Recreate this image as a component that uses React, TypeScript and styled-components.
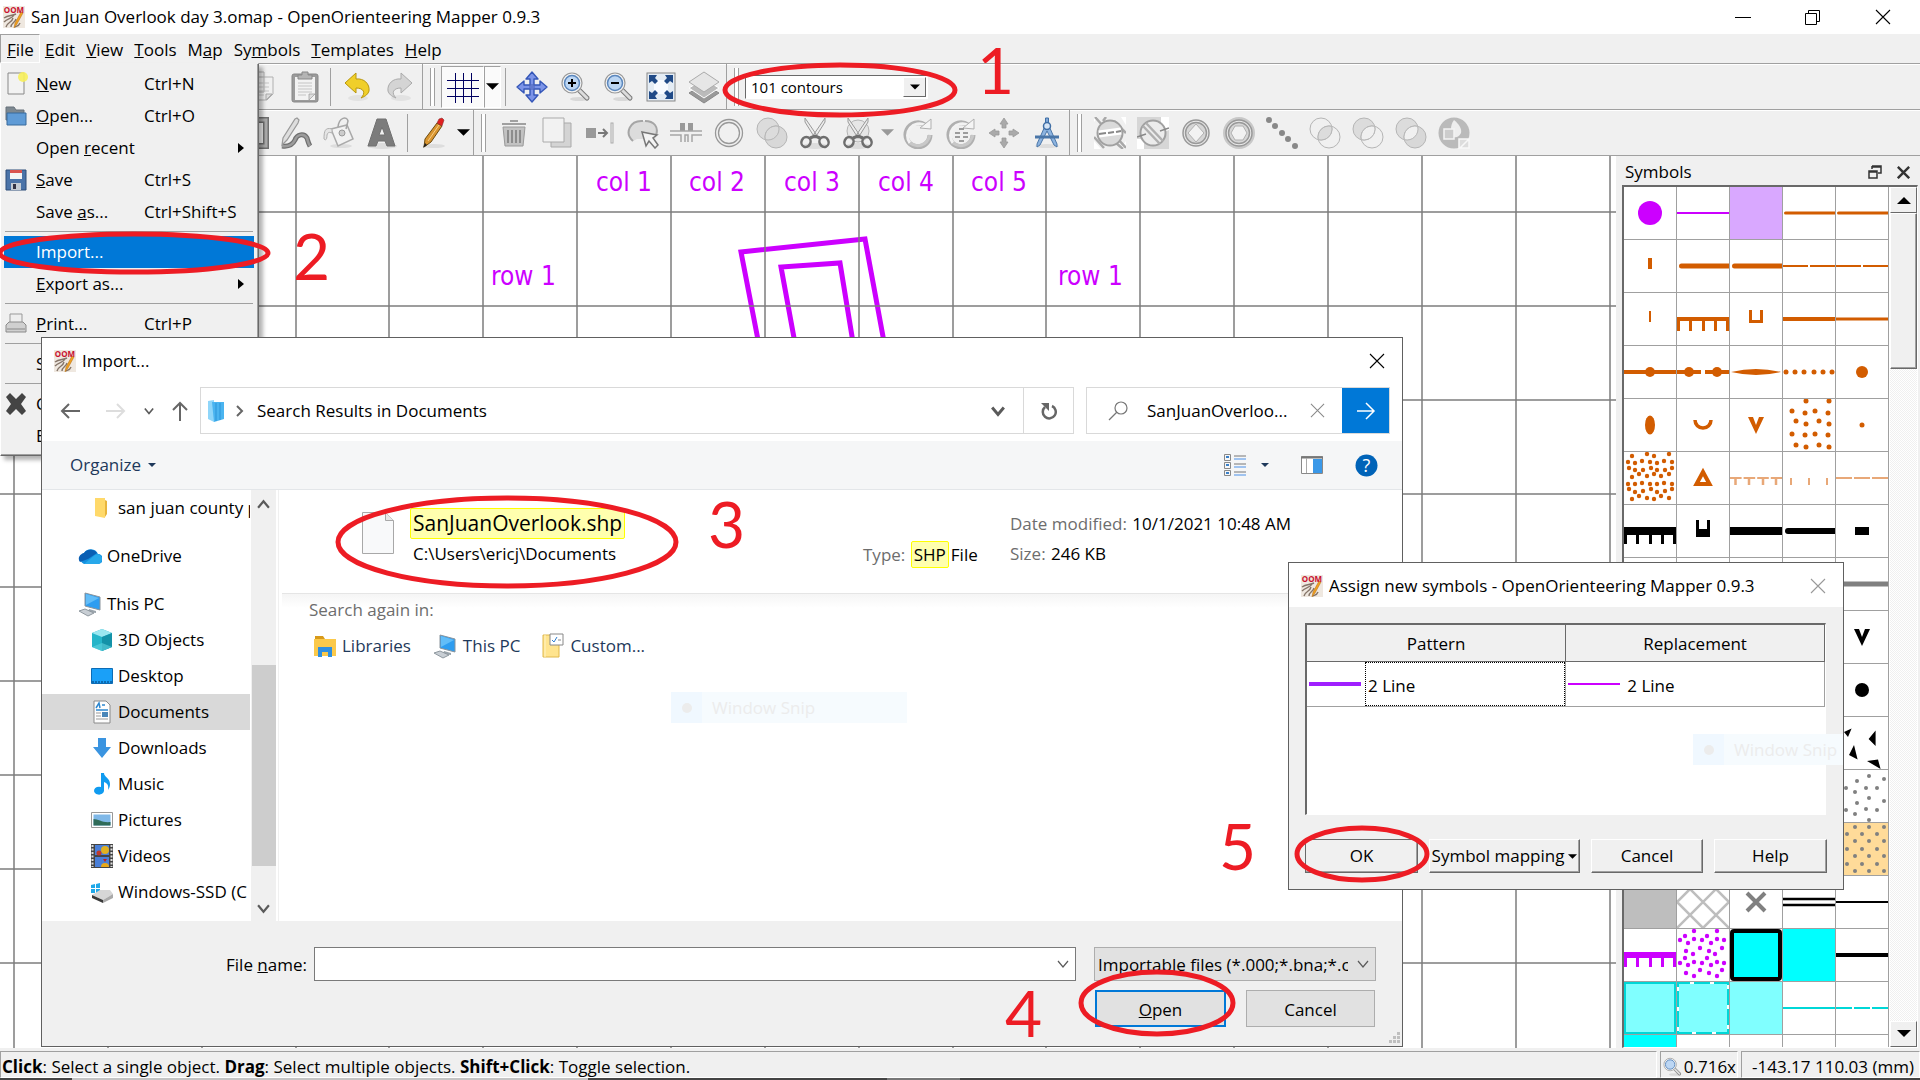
import React from 'react';
import styled, { createGlobalStyle, css } from 'styled-components';

const GlobalStyle = createGlobalStyle`
  * { box-sizing: border-box; }
  body { margin: 0; background: #f0f0f0; overflow: hidden; }
  body, button, input, select, table {
    font-family: "Open Sans", "Noto Sans", sans-serif;
    font-size: 17px;
    line-height: 24px;
    color: #000;
  }
  button { background: none; border: 0; padding: 0; }
  svg { display: block; flex: none; }
`;

/* ---------- window frame ---------- */

const Page = styled.div`
  position: relative;
  height: 100vh;
  display: flex;
  flex-direction: column;
  overflow: hidden;
  background: #f0f0f0;
`;

const TitleBar = styled.header`
  display: flex;
  align-items: center;
  height: 34px;
  flex: none;
  padding: 0 2px 0 3px;
  gap: 6px;
  background: #fff;
`;

const AppTitle = styled.h1`
  flex: 1;
  margin: 0;
  font-size: 17px;
  font-weight: 400;
`;

const WindowButtons = styled.div`
  display: flex;
`;

const WindowButton = styled.button`
  width: 70px;
  height: 34px;
  display: flex;
  align-items: center;
  justify-content: center;
`;

const MenuBar = styled.nav`
  display: flex;
  flex: none;
  height: 29px;
`;

const MenuBarItem = styled.button<{ $open?: boolean }>`
  padding: 2px 5px 0 4px;
  height: 29px;
  border: 1px solid transparent;
  ${(p) => p.$open && css`
    padding: 2px 5px 0 6px;
    border-color: #a0a0a0 #fff #fff #a0a0a0;
  `}
`;

/* ---------- toolbars ---------- */

const Toolbar = styled.div<{ $inset: number }>`
  display: flex;
  flex: none;
  height: 46px;
  padding-left: ${(p) => p.$inset}px;
  border-top: 1px solid #a0a0a0;
  box-shadow: inset 0 1px #fff;
`;

const ToolGroup = styled.div<{ $open?: boolean }>`
  display: flex;
  align-items: center;
  padding-right: 1px;
  border-right: ${(p) => (p.$open ? 0 : 1)}px solid #a0a0a0;
`;

const Grip = styled.span`
  width: 5px;
  height: 38px;
  margin: 0 6px 0 7px;
  border: solid #a0a0a0;
  border-width: 0 1px;
  background: #fff;
`;

const Separator = styled.span`
  width: 1px;
  height: 38px;
  margin: 0 4px;
  background: #a0a0a0;
`;

const ToolButton = styled.button<{ $narrow?: boolean; $pressed?: boolean }>`
  width: ${(p) => (p.$narrow ? 17 : 43)}px;
  height: 42px;
  display: flex;
  align-items: center;
  justify-content: center;
  ${(p) => p.$pressed && css`
    background: #fafafa;
    border: 1px solid;
    border-color: #a0a0a0 #fff #fff #a0a0a0;
  `}
`;

const SelectShell = styled.span`
  position: relative;
  display: inline-flex;
`;

const SymbolSelect = styled.select`
  appearance: none;
  width: 183px;
  height: 24px;
  padding: 0 28px 0 5px;
  border: 1px solid;
  border-color: #696969 #fff #fff #696969;
  border-radius: 0;
  background: #fff;
  font-size: 15px;
  line-height: 20px;
`;

const SelectArrow = styled.span`
  position: absolute;
  right: 2px;
  top: 2px;
  width: 23px;
  height: 20px;
  display: flex;
  align-items: center;
  justify-content: center;
  pointer-events: none;
  background: #f0f0f0;
  border: 1px solid;
  border-color: #fff #696969 #696969 #fff;
`;

const Workspace = styled.main`
  display: flex;
  flex: 1;
  min-height: 0;
  border-top: 1px solid #a0a0a0;
`;

const MapView = styled.svg`
  flex: 1;
  min-width: 0;
  background: #fff;
`;

/* ---------- symbols dock ---------- */

const Dock = styled.aside`
  width: 304px;
  flex: none;
  display: flex;
  flex-direction: column;
  padding: 0 2px 0 6px;
`;

const DockHeader = styled.div`
  display: flex;
  align-items: center;
  height: 29px;
  padding: 3px 8px 0 3px;
  gap: 15px;
`;

const DockTitle = styled.h2`
  flex: 1;
  margin: 0;
  font-size: 17px;
  font-weight: 400;
`;

const SymbolFrame = styled.div`
  flex: 1;
  min-height: 0;
  display: flex;
  justify-content: space-between;
  overflow: hidden;
  background: #fff;
  border: solid;
  border-width: 2px 1px 1px 2px;
  border-color: #696969 #fff #fff #696969;
`;

const SymbolGrid = styled.div`
  display: grid;
  grid-template-columns: repeat(5, 53px);
  grid-auto-rows: 53px;
`;

const SymbolCell = styled.button`
  border: solid #a0a0a0;
  border-width: 0 1px 1px 0;
  overflow: hidden;
`;

const ClassicScroll = styled.div`
  width: 27px;
  display: flex;
  flex-direction: column;
  background: repeating-conic-gradient(#f0f0f0 0 25%, #fff 0 50%) 0 0 / 2px 2px;
`;

const ClassicScrollButton = styled.button`
  height: 26px;
  display: flex;
  align-items: center;
  justify-content: center;
  background: #f0f0f0;
  border: 1px solid;
  border-color: #fff #696969 #696969 #fff;
`;

const ClassicThumb = styled.div`
  height: 156px;
  margin-bottom: auto;
  background: #f0f0f0;
  border: 1px solid;
  border-color: #fff #696969 #696969 #fff;
  box-shadow: inset -1px -1px #a0a0a0;
`;

/* ---------- status bar ---------- */

const StatusBar = styled.footer`
  display: flex;
  flex: none;
  gap: 3px;
  height: 29px;
  margin-top: 1px;
  padding-top: 2px;
`;

const StatusCell = styled.div<{ $grow?: boolean }>`
  display: flex;
  align-items: center;
  gap: 2px;
  flex: ${(p) => (p.$grow ? '1' : 'none')};
  padding: 4px 1px 0;
  white-space: pre;
  border: 1px solid;
  border-color: #a0a0a0 #fff #fff #a0a0a0;
`;

const Coordinates = styled(StatusCell)`
  width: 179px;
  padding-left: 10px;
`;

const TaskbarEdge = styled.div`
  flex: none;
  height: 2px;
  background: linear-gradient(90deg, #444 72px, #c4c4c4 72px 588px, #444 588px 887px, #777 887px 960px, #444 960px);
`;

/* ---------- file menu ---------- */

const FileMenu = styled.div`
  position: absolute;
  left: 0;
  top: 63px;
  width: 259px;
  padding: 3px 4px 3px 3px;
  background: #f0f0f0;
  border: 1px solid;
  border-color: #f0f0f0 #696969 #696969 #fff;
  box-shadow: inset -1px -1px #a0a0a0, 4px 4px 4px rgba(0, 0, 0, 0.3);
`;

const MenuRow = styled.button<{ $active?: boolean }>`
  display: grid;
  grid-template-columns: 32px 108px 1fr 16px;
  align-items: center;
  width: 100%;
  height: 32px;
  text-align: left;
  white-space: nowrap;
  &:first-child { height: 33px; }
  ${(p) => p.$active && css`
    background: #0078d7;
    color: #fff;
  `}
`;

const MenuIcon = styled.span`
  display: flex;
  align-items: center;
`;

const MenuLine = styled.hr`
  height: 1px;
  margin: 3px 1px 4px;
  border: 0;
  background: #a0a0a0;
`;

/* ---------- import dialog ---------- */

const ImportDialog = styled.section`
  position: absolute;
  left: 41px;
  top: 337px;
  width: 1362px;
  height: 710px;
  display: flex;
  flex-direction: column;
  background: #fff;
  border: 1px solid #606060;
`;

const DialogHeader = styled.div<{ $tall?: boolean }>`
  display: flex;
  flex: none;
  align-items: center;
  gap: 6px;
  height: ${(p) => (p.$tall ? 49 : 44)}px;
  padding: ${(p) => (p.$tall ? '0 17px 4px 12px' : '2px 17px 0 12px')};
  background: #fff;
`;

const DialogTitle = styled.h2`
  flex: 1;
  margin: 0;
  font-size: 17px;
  font-weight: 400;
  white-space: nowrap;
`;

const AddressRow = styled.div`
  display: flex;
  align-items: center;
  height: 47px;
  margin-bottom: 7px;
  padding: 0 12px 0 18px;
`;

const NavButtons = styled.div`
  display: flex;
  align-items: center;
  gap: 18px;
  margin-right: 12px;
`;

const HistoryButtons = styled.div`
  display: flex;
  gap: 26px;
`;

const AddressBox = styled.div`
  display: flex;
  align-items: center;
  flex: 1;
  height: 47px;
  border: 1px solid #d9d9d9;
`;

const Crumb = styled.span`
  flex: 1;
  margin-left: 12px;
`;

const BoxButton = styled.button<{ $divided?: boolean }>`
  width: 50px;
  height: 45px;
  display: flex;
  align-items: center;
  justify-content: center;
  border-left: ${(p) => (p.$divided ? 1 : 0)}px solid #d9d9d9;
`;

const SearchBox = styled.label`
  display: flex;
  align-items: center;
  width: 304px;
  height: 47px;
  margin-left: 12px;
  padding-left: 21px;
  border: 1px solid #d9d9d9;
`;

const SearchInput = styled.input`
  flex: 1;
  min-width: 0;
  margin-left: 19px;
  padding: 0;
  border: 0;
  outline: 0;
  text-overflow: ellipsis;
`;

const GoButton = styled(BoxButton)`
  width: 47px;
  background: #0078d7;
`;

const CommandBar = styled.div`
  display: flex;
  align-items: center;
  height: 49px;
  padding: 0 24px 0 28px;
  background: #f5f6f7;
  border-bottom: 1px solid #e3e6e9;
  color: #1e395b;
`;

const OrganizeButton = styled.button`
  display: flex;
  align-items: center;
  gap: 7px;
  margin-right: auto;
  color: #1e395b;
`;

const IconButton = styled.button<{ $gap: number }>`
  margin-left: ${(p) => p.$gap}px;
`;

const Browser = styled.div`
  flex: 1;
  min-height: 0;
  display: flex;
`;

const Tree = styled.ul`
  width: 208px;
  margin: 0;
  padding: 0;
  list-style: none;
  overflow: hidden;
`;

const TreeItem = styled.li<{ $root?: boolean; $selected?: boolean; $spaced?: boolean }>`
  display: flex;
  align-items: center;
  gap: 5px;
  height: 36px;
  margin-top: ${(p) => (p.$spaced ? 12 : 0)}px;
  padding: 0 0 0 ${(p) => (p.$root ? 36 : 49)}px;
  white-space: nowrap;
  background: ${(p) => (p.$selected ? '#d9d9d9' : 'transparent')};
`;

const TreeScroll = styled.div`
  width: 25px;
  margin: 0 2px 0 1px;
  display: flex;
  flex-direction: column;
  align-items: center;
  justify-content: space-between;
  padding: 8px 0 6px;
  background: #f0f0f0;
`;

const TreeThumb = styled.div`
  width: 24px;
  height: 201px;
  margin-top: 117px;
  background: #cdcdcd;
`;

const Results = styled.div`
  flex: 1;
  min-width: 0;
  border-left: 1px solid #f0f0f0;
`;

const FileEntry = styled.article`
  display: grid;
  grid-template-columns: 48px 453px 147px 1fr;
  grid-template-rows: 32px 28px;
  align-items: center;
  height: 104px;
  margin-left: 3px;
  padding: 17px 0 0 80px;
  border-bottom: 1px solid #e5e5e5;
`;

const FileIcon = styled.div`
  grid-row: 1 / 3;
  align-self: start;
  padding-top: 5px;
`;

const Mark = styled.mark<{ $big?: boolean }>`
  display: inline-block;
  padding: ${(p) => (p.$big ? '1px 2px' : '0 2px')};
  margin-right: 2px;
  font-size: ${(p) => (p.$big ? 21 : 17)}px;
  line-height: ${(p) => (p.$big ? 27 : 25)}px;
  background: #ffffae;
  border: 1px solid #ffff00;
  border-radius: 2px;
`;

const PathText = styled.span`
  padding: 2px 0 0 3px;
  grid-column: 2;
`;

const Meta = styled.span<{ $col: number }>`
  grid-column: ${(p) => p.$col};
  padding-top: 2px;
  white-space: nowrap;
`;

const Muted = styled.span`
  margin-right: 1px;
  color: #6d6d6d;
`;

const SearchAgain = styled.div`
  margin-left: 3px;
  padding: 4px 0 0 27px;
  color: #6d6d6d;
  background: linear-gradient(#f5f5f5, #fff 14px);
`;

const PlaceLinks = styled.div`
  display: flex;
  gap: 22px;
  padding: 11px 0 0 5px;
`;

const PlaceLink = styled.a`
  display: flex;
  align-items: center;
  gap: 6px;
  color: #1e395b;
  text-decoration: none;
`;

const Ghost = styled.div<{ $x: number; $y: number; $w: number }>`
  position: absolute;
  left: ${(p) => p.$x}px;
  top: ${(p) => p.$y}px;
  width: ${(p) => p.$w}px;
  height: 31px;
  display: flex;
  align-items: center;
  gap: 19px;
  padding: 1px 0 0 10px;
  overflow: hidden;
  white-space: nowrap;
  color: #ececec;
  background: linear-gradient(90deg, #f0f8ff 31px, #f6fbfe 31px);
`;

const DialogFooter = styled.div`
  position: relative;
  flex: none;
  display: grid;
  grid-template-columns: 1fr 762px 282px;
  column-gap: 18px;
  row-gap: 9px;
  align-content: start;
  height: 125px;
  padding: 26px 26px 0 0;
  background: #f0f0f0;
`;

const FieldLabel = styled.label`
  justify-self: end;
  align-self: center;
  padding-top: 1px;
  margin-right: -11px;
`;

const FieldShell = styled.span`
  position: relative;
  display: flex;
  height: 34px;
`;

const FileInput = styled.input`
  flex: 1;
  border: 1px solid #7a7a7a;
  background: #fff;
  padding: 0 30px 0 4px;
`;

const TypeSelect = styled.select`
  appearance: none;
  width: 282px;
  padding: 1px 27px 0 3px;
  border: 1px solid #adadad;
  border-radius: 0;
  background: #e1e1e1;
`;

const FieldChevron = styled.span`
  position: absolute;
  right: 7px;
  top: 11px;
  pointer-events: none;
`;

const ActionRow = styled.div`
  grid-column: 3;
  display: flex;
  gap: 20px;
  padding: 0 1px;
`;

const FlatButton = styled.button<{ $primary?: boolean }>`
  flex: 1;
  height: 37px;
  padding-top: 2px;
  background: #e1e1e1;
  border: ${(p) => (p.$primary ? '2px solid #0078d7' : '1px solid #adadad')};
`;

const ResizeGrip = styled.span`
  position: absolute;
  right: 2px;
  bottom: 2px;
`;

/* ---------- assign dialog ---------- */

const AssignDialog = styled.section`
  position: absolute;
  left: 1288px;
  top: 562px;
  width: 556px;
  height: 328px;
  display: flex;
  flex-direction: column;
  background: #f0f0f0;
  border: 1px solid #606060;
`;

const TableFrame = styled.div`
  height: 192px;
  margin: 16px 17px 24px 16px;
  background: #fff;
  border: solid;
  border-width: 2px 1px 1px 2px;
  border-color: #696969 #fff #fff #696969;
`;

const MappingTable = styled.table`
  width: 100%;
  border-collapse: collapse;
  table-layout: fixed;
`;

const HeadCell = styled.th`
  height: 36px;
  padding: 3px 0 0;
  font-weight: 400;
  background: #f0f0f0;
  border: solid #696969;
  border-width: 0 1px 1px 0;
`;

const BodyCell = styled.td`
  height: 45px;
  padding: 0;
  border: solid #a0a0a0;
  border-width: 0 1px 1px 0;
`;

const CellRow = styled.div`
  display: flex;
  align-items: center;
  gap: 4px;
  height: 44px;
  padding-left: 2px;
`;

const CellText = styled.span<{ $focus?: boolean }>`
  flex: 1;
  height: 44px;
  padding-left: 2px;
  line-height: 45px;
  border: 1px ${(p) => (p.$focus ? 'dotted #000' : 'solid transparent')};
`;

const ButtonRow = styled.div`
  display: flex;
  gap: 11px;
  padding: 0 16px;
`;

const ClassicButton = styled.button<{ $w: number; $default?: boolean }>`
  width: ${(p) => p.$w}px;
  height: 34px;
  display: flex;
  align-items: center;
  justify-content: center;
  gap: 4px;
  white-space: nowrap;
  border: 1px solid;
  border-color: #fff #696969 #696969 #fff;
  box-shadow: inset -1px -1px #a0a0a0;
  ${(p) => p.$default && css`
    border-color: #696969;
  `}
`;

/* ---------- annotations ---------- */

const Annotations = styled.svg`
  position: absolute;
  inset: 0;
  width: 100%;
  height: 100%;
  pointer-events: none;
  font-family: Lato, sans-serif;
  font-size: 64px;
`;

/* ---------- icon drawings ---------- */

type Size = { w?: number; h?: number };
const Draw = ({ w = 32, h = 32, vb, children }: Size & { vb?: string; children?: React.ReactNode }) => (
  <svg width={w} height={h} viewBox={vb ?? `0 0 ${w} ${h}`} fill="none" aria-hidden="true">{children}</svg>
);

const OomIcon = () => (
  <Draw w={22} h={24}>
    <rect y="1" width="22" height="22" fill="#efe8e0" />
    <path d="M1 13c4-3 8-2 12-4M1 17c4-4 8-3 10-7M3 22c1-5 6-4 7-9M8 22c0-4 4-4 5-8M12 22c2-1 4-1 5-4" stroke="#857569" strokeWidth="1.4" />
    <path d="M20 8l-6 11-3 4 1-5 6-11z" fill="#f0a020" stroke="#b06a10" strokeWidth=".5" />
    <text x="11" y="8" textAnchor="middle" fontSize="8" fontWeight="700" fill="#c8102e">OOM</text>
  </Draw>
);

const Close = ({ s = 16, c = '#000', t = 1.1 }: { s?: number; c?: string; t?: number }) => (
  <Draw w={s} h={s} vb="0 0 16 16"><path d="M1 1l14 14M15 1L1 15" stroke={c} strokeWidth={t} /></Draw>
);

const Down = ({ c = '#000', w = 13 }: { c?: string; w?: number }) => (
  <Draw w={w} h={w} vb="0 0 12 12"><path d="M0 3h12L6 9z" fill={c} /></Draw>
);

const Chevron = ({ c = '#5a5a5a', w = 12, t = 2, up = false }: { c?: string; w?: number; t?: number; up?: boolean }) => (
  <Draw w={w} h={w} vb="0 0 12 12"><path d={up ? 'M1 9l5-6 5 6' : 'M1 3l5 6 5-6'} stroke={c} strokeWidth={t} /></Draw>
);

const Magnifier = ({ sign, w = 32 }: { sign?: 'plus' | 'minus'; w?: number }) => (
  <Draw w={w} h={w} vb="0 0 32 32">
    <ellipse cx="20" cy="28" rx="9" ry="2" fill="#d8d8d8" />
    <path d="M19 18l9 9" stroke="#777" strokeWidth="5" strokeLinecap="round" />
    <path d="M19 18l9 9" stroke="#dcdcdc" strokeWidth="3" strokeLinecap="round" />
    <circle cx="13" cy="12" r="10" fill="#f4f4f4" stroke="#999" strokeWidth="1.2" />
    <circle cx="13" cy="12" r="7.5" fill="#bcd6f3" stroke="#5b87bd" strokeWidth="1.5" />
    {sign && <path d={sign === 'plus' ? 'M9 12h8M13 8v8' : 'M9 12h8'} stroke="#000" strokeWidth="2" />}
  </Draw>
);

const Move = ({ fill, stroke, gap }: { fill: string; stroke: string; gap?: boolean }) => (
  <Draw>
    {gap ? (
      <g fill={fill} stroke={stroke} strokeWidth=".8">
        {[0, 90, 180, 270].map((a) => (
          <path key={a} transform={`rotate(${a} 16 16)`} d="M16 1l4 6h-2v4h-4V7h-2z" />
        ))}
      </g>
    ) : (
      <g>
        <path d="M16 1l6 7h-4v6h6v-4l7 6-7 6v-4h-6v6h4l-6 7-6-7h4v-6H8v4l-7-6 7-6v4h6V8h-4z" fill={fill} stroke={stroke} strokeWidth="1.4" strokeLinejoin="round" />
        <rect x="13" y="13" width="6" height="6" fill="#5068bc" opacity=".6" />
      </g>
    )}
  </Draw>
);

const Turn = ({ fill, stroke, flip }: { fill: string; stroke: string; flip?: boolean }) => (
  <Draw>
    <ellipse cx="17" cy="27" rx="10" ry="3" fill="#e2e2e2" />
    <path transform={flip ? 'translate(32 0) scale(-1 1)' : undefined}
      d="M4 12L15 2v6c8-1 14 5 13 12-1 3-3 5-8 7 5-5 3-10-5-10v5z" fill={fill} stroke={stroke} strokeLinejoin="round" />
  </Draw>
);

const Scissors = ({ ring }: { ring?: boolean }) => (
  <Draw>
    {ring && <circle cx="16" cy="14" r="11" fill="#e6e6e6" stroke="#b5b5b5" />}
    <ellipse cx="16" cy="29" rx="13" ry="3" fill="#dcdcdc" />
    <path d="M6 1l13 19-3 1L6 5zM26 1L13 20l3 1L26 5z" fill="#ececec" stroke="#999" />
    <ellipse cx="7" cy="25" rx="4.5" ry="5" stroke="#6e6e6e" strokeWidth="2.5" transform="rotate(25 7 25)" />
    <ellipse cx="25" cy="25" rx="4.5" ry="5" stroke="#6e6e6e" strokeWidth="2.5" transform="rotate(-25 25 25)" />
    <path d="M11 21l5-2 5 2" stroke="#6e6e6e" strokeWidth="3" />
  </Draw>
);

const Rotate = ({ inner }: { inner?: boolean }) => (
  <Draw>
    <path d="M23 8A12 12 0 1 0 28 18" stroke="#b0b0b0" strokeWidth="5" />
    <path d="M23 8A12 12 0 0 0 8 26" stroke="#f2f2f2" strokeWidth="3" />
    <path d="M8 26c7 5 17 3 20-8" stroke="#c8c8c8" strokeWidth="3" />
    <path d="M18 11l11 1V2z" fill="#f4f4f4" stroke="#b0b0b0" />
    {inner && <path d="M10 16h5M18 16h5M10 20h5M18 20h5M14 12h5M14 24h5" stroke="#9c9c9c" strokeWidth="2" />}
  </Draw>
);

const LENS = 'M22.67 9.33A11 11 0 0 1 9.33 22.67A11 11 0 0 1 22.67 9.33z';
const Overlap = ({ mode }: { mode: 'union' | 'cut' | 'diff' | 'xor' }) => {
  const a = mode === 'cut' ? 'none' : '#dcdcdc';
  const b = mode === 'union' || mode === 'xor' ? '#d8d8d8' : 'none';
  return (
    <Draw>
      <circle cx="12" cy="12" r="11" fill={a} stroke="#b5b5b5" />
      <circle cx="20" cy="20" r="11" fill={b} stroke="#b5b5b5" />
      <path d={LENS} fill={mode === 'cut' || mode === 'union' ? '#dcdcdc' : '#f0f0f0'} stroke="#b5b5b5" />
    </Draw>
  );
};

const DiamondRing = ({ bold }: { bold?: boolean }) => (
  <Draw>
    {bold && <circle cx="16" cy="16" r="14" stroke="#c8c8c8" strokeWidth="4" />}
    <circle cx="16" cy="16" r="13" fill="#ececec" stroke="#999" strokeWidth="1.5" />
    <circle cx="16" cy="16" r="10.5" fill="#d6d6d6" stroke="#999" strokeWidth="1.5" />
    <path d={bold ? 'M12 9h8l4 7-4 7h-8l-4-7z' : 'M16 7l8 9-8 9-8-9z'} fill="#f2f2f2" stroke="#b0b0b0" />
  </Draw>
);

const Monitor = () => (
  <Draw w={24} h={26}>
    <path d="M7 2l15 4v13L7 15z" fill="#2e9df0" stroke="#8a949c" />
    <path d="M8 3l13 4-13 7z" fill="#62bdf8" />
    <path d="M11 18l7 2v2l-8-1z" fill="#9aa4ac" />
    <path d="M1 20l6-2 9 4-6 3z" fill="#c8ced4" stroke="#8f989f" />
  </Draw>
);

const DocSheet = () => (
  <Draw w={32} h={42}>
    <path d="M.5.5h23l8 8v33H.5z" fill="#f8f9fa" stroke="#a8a8a8" />
    <path d="M23.5.5v8h8" fill="#e8e8e8" stroke="#a8a8a8" />
  </Draw>
);

/* ---------- toolbar icon sets ---------- */

const CopyIcon = () => (
  <Draw>
    <path d="M3 1h15v20H3zM8 6h19v17l-6 6H8z" fill="#f0f0f0" stroke="#b0b0b0" />
    <path d="M11 12h12M11 16h12M11 20h12M11 24h7" stroke="#c4c4c4" />
    <path d="M20 29v-6h6z" fill="#ddd" stroke="#aaa" />
  </Draw>
);

const PasteIcon = () => (
  <Draw>
    <rect x="3" y="3" width="26" height="28" rx="2" fill="#9b9b9b" stroke="#888" />
    <path d="M6 6h20v23H6z" fill="#f2f2f2" />
    <path d="M9 12h14M9 15h14M9 18h14M9 21h14M9 24h8" stroke="#c4c4c4" />
    <path d="M20 29v-6h6z" fill="#ddd" stroke="#999" strokeWidth=".7" />
    <path d="M9 8V4h4V1h6v3h4v4z" fill="#b4b4b4" stroke="#888" />
  </Draw>
);

const GridIcon = () => (
  <Draw><path d="M0 9.5h32M0 17.5h32M0 25.5h32M8.5 2v31M16.5 2v31M24.5 2v31" stroke="#000060" /></Draw>
);

const FitIcon = () => (
  <Draw>
    <rect x="2" y="2" width="28" height="28" fill="#e4ecf4" stroke="#888" />
    <rect x="9" y="9" width="14" height="14" fill="#f8fbff" />
    <path d="M4 4h8l-2 3 3 3-3 3-3-3-3 2zM28 4v8l-3-2-3 3-3-3 3-3-2-3zM4 28v-8l3 2 3-3 3 3-3 3 2 3zM28 28h-8l2-3-3-3 3-3 3 3 3-2z" fill="#204a87" />
  </Draw>
);

const LayersIcon = () => (
  <Draw w={34} h={34}>
    <path d="M17 14l15 9-15 10L2 23z" fill="#999" stroke="#888" />
    <path d="M17 9l15 9-15 10L2 18z" fill="#bbb" stroke="#fff" />
    <path d="M17 2l15 10-15 10L2 12z" fill="#e6e6e6" stroke="#aaa" />
  </Draw>
);

const DrawRectIcon = () => (
  <Draw><rect x="3" y="3" width="26" height="26" stroke="#707070" strokeWidth="6" /><rect x="3" y="3" width="26" height="26" stroke="#aaa" strokeWidth="3" /></Draw>
);

const CurveIcon = () => (
  <Draw>
    <path d="M2 29c7 1 11-2 13-6 2-6 9-7 12-2 1 3 1 5 3 8" stroke="#707070" strokeWidth="5" />
    <path d="M2 29c7 1 11-2 13-6 2-6 9-7 12-2 1 3 1 5 3 8" stroke="#9c9c9c" strokeWidth="2.5" />
    <path d="M15 2l2-1 2 2-1 3L7 23l-5 5 1-7z" fill="#dedede" stroke="#999" strokeWidth="1.2" />
  </Draw>
);

const BucketIcon = () => (
  <Draw>
    <ellipse cx="18" cy="29" rx="11" ry="2" fill="#ddd" />
    <path d="M8 12l16-4 6 14-15 7z" fill="#f2f2f2" stroke="#aaa" strokeWidth="1.5" />
    <path d="M15 10c1-10 9-11 10-6l-2 8" stroke="#a5a5a5" strokeWidth="1.5" />
    <circle cx="19" cy="16" r="3" fill="#ccc" stroke="#999" />
    <path d="M9 12c-7-2-8 2-8 10 2 2 3 0 3-4 1-3 2-3 5-2z" fill="#e5e5e5" stroke="#b0b0b0" />
  </Draw>
);

const LetterIcon = () => (
  <Draw>
    <ellipse cx="16" cy="29" rx="15" ry="3" fill="#ddd" />
    <path fillRule="evenodd" d="M11 2h9l9 27h-8l-2-5h-7l-2 5H2zM16 10l-3 8h6z" fill="#7c7c7c" stroke="#707070" />
  </Draw>
);

const PencilIcon = () => (
  <Draw>
    <ellipse cx="16" cy="29" rx="11" ry="2" fill="#ddd" />
    <g transform="translate(2 0)">
      <path d="M17 6l5 3-11 16-7 5 1-8z" fill="#d9952f" stroke="#6b4a10" />
      <path d="M17 6l2-4 3-1 2 2-1 3-1 3z" fill="#e02020" stroke="#833" strokeWidth=".6" />
      <path d="M5 26l2 2-4 3z" fill="#222" />
      <path d="M19 8L8 24" stroke="#f8d08a" />
    </g>
  </Draw>
);

const TrashIcon = () => (
  <Draw>
    <path d="M5 10h22l-2 19H7z" fill="#c2c2c2" stroke="#9a9a9a" />
    <path d="M10 13v13M14 13v13M18 13v13M22 13v13" stroke="#8c8c8c" strokeWidth="2" />
    <path d="M4 7h24M12 4h8" stroke="#a0a0a0" strokeWidth="2" />
  </Draw>
);

const DuplicateIcon = () => (
  <Draw>
    <path d="M10 6h20v24H10z" fill="#d4d4d4" stroke="#aaa" />
    <path d="M2 1h21v24H2z" fill="#f2f2f2" stroke="#aaa" />
  </Draw>
);

const SwitchIcon = () => (
  <Draw>
    <rect x="2" y="11" width="10" height="10" fill="#999" />
    <path d="M14 16h8M19 12l4 4-4 4" stroke="#777" strokeWidth="2" />
    <rect x="27" y="6" width="2" height="20" stroke="#aaa" />
  </Draw>
);

const LassoIcon = () => (
  <Draw>
    <path d="M6 24C-3 16 3 3 16 4c13 0 18 10 12 18H10z" fill="#dcdcdc" />
    <path d="M6 24C-3 16 3 3 16 4M18 4c9 0 14 6 11 14" stroke="#a5a5a5" strokeWidth="2" />
    <path d="M15 15l15 3-4 3 5 7-3 3-6-7-3 5z" fill="#f4f4f4" stroke="#777" strokeWidth="1.5" />
  </Draw>
);

const JunctionIcon = () => (
  <Draw>
    <path d="M10 6h5v8h-5zM18 6h5v8h-5z" fill="#999" />
    <path d="M0 14h32M0 18h11v7M22 25v-7h10M15 25v-7h3v7" stroke="#a5a5a5" strokeWidth="1.5" />
  </Draw>
);

const RingIcon = () => (
  <Draw><circle cx="16" cy="16" r="13.5" stroke="#989898" strokeWidth="1.3" /><circle cx="16" cy="16" r="10.5" stroke="#989898" strokeWidth="1.3" /></Draw>
);

const CompassIcon = () => (
  <Draw>
    <ellipse cx="16" cy="29" rx="12" ry="2" fill="#ddd" />
    <path d="M14.5 1h3v6h-3z" fill="#7fa8d8" stroke="#3f6ea5" />
    <path d="M14 9L6 27v3l3-2 7-14 7 14 3 2v-3l-8-18z" fill="#8db4e0" stroke="#4a76a8" />
    <circle cx="16" cy="9" r="3.5" fill="#d5e4f5" stroke="#3f6ea5" strokeWidth="1.5" />
    <path d="M4 20h24" stroke="#4a76a8" strokeWidth="3" />
  </Draw>
);

const CutHoleIcon = () => (
  <Draw>
    <path d="M0 0h4L0 5zM27 0h5v8zM0 24l7 8H0zM32 24v8h-6z" fill="#fff" />
    <path d="M1 0l8 9M12 0l-3 4M32 16L20 4M0 20l10 11M22 26l7 6M24 22l8 9" stroke="#a8a8a8" strokeWidth="2.5" />
    <circle cx="16" cy="16" r="12.5" fill="#dadada" stroke="#a0a0a0" strokeWidth="2" />
    <path d="M5 17l22-3" stroke="#fff" strokeWidth="7" />
    <path d="M5 17l7-1M14 16l6-1M22 15l5-1" stroke="#888" strokeWidth="2" />
  </Draw>
);

const CutAwayIcon = () => (
  <Draw>
    <path d="M0 0h32v32H0z" fill="#d6d6d6" />
    <path d="M0 22h7v10H0zM24 0h8v13l-8 3z" fill="#fff" />
    <circle cx="16" cy="16" r="12.5" fill="#ececec" stroke="#a0a0a0" strokeWidth="2" />
    <path d="M9 6l17 18M6 9l17 18" stroke="#b0b0b0" strokeWidth="2.5" />
    <path d="M0 20l9-3M23 14l9-3" stroke="#888" strokeWidth="1.5" />
  </Draw>
);

const DotsIcon = () => (
  <Draw><g fill="#888">{[[3, 3], [9, 9], [16, 16], [22, 22], [29, 29]].map(([x, y]) => <circle key={x} cx={x} cy={y} r="3" />)}</g></Draw>
);

const MaskIcon = () => (
  <Draw>
    <circle cx="16" cy="16" r="15.5" fill="#bababa" />
    <path d="M16 3c5 4 8 9 7 13-2 4-5 5-7 4-4-4-4-12 0-17z" fill="#eee" />
    <path d="M6 12h10v10H6z" fill="#ccc" stroke="#f4f4f4" strokeWidth="1.5" />
    <path d="M21 22h10v9H21zM22 31l9-9" fill="#ddd" stroke="#f8f8f8" strokeWidth="1.5" />
  </Draw>
);

/* ---------- menu and tree icons ---------- */

const NewIcon = () => (
  <Draw w={24} h={26}>
    <path d="M4 2h16v21H4z" fill="#f2f2f2" stroke="#888" />
    <circle cx="19" cy="6" r="5" fill="#f7ef5a" opacity=".9" />
  </Draw>
);
const OpenIcon = () => (
  <Draw w={24} h={24}>
    <path d="M2 3h8l2 3h8v10H2z" fill="#7d8890" stroke="#66707a" />
    <path d="M3 9h19v12H3z" fill="#5f9bd6" stroke="#396a9c" />
  </Draw>
);
const SaveIcon = () => (
  <Draw w={24} h={24}>
    <path d="M2 2h20v20H2z" fill="#4a73a8" stroke="#2d4d78" />
    <path d="M6 2h12v9H6z" fill="#f4f4f4" /><path d="M6 2h12v3H6z" fill="#d9534f" />
    <path d="M7 15h10v7H7z" fill="#c5ccd4" /><path d="M9 16h3v5H9z" fill="#334" />
  </Draw>
);
const PrintIcon = () => (
  <Draw w={24} h={24}>
    <path d="M6 2h12v11H6z" fill="#eee" stroke="#999" />
    <path d="M2 13l3-3h14l3 3v7H2z" fill="#d0d0d0" stroke="#8a8a8a" />
    <path d="M3 17h18" stroke="#888" />
  </Draw>
);
const ExitCross = () => (
  <Draw w={24} h={24}><path d="M2 5l4-4 6 6 6-6 4 4-5 7 5 7-4 4-6-6-6 6-4-4 5-7z" fill="#444" /></Draw>
);

const FolderIcon = () => (
  <Draw w={22} h={24}><path d="M4 2h10v20l-10-2z" fill="#ffd96a" /><path d="M14 4l2 1v13l-2 3z" fill="#e8b53c" /></Draw>
);
const CloudIcon = () => (
  <Draw w={24} h={20}>
    <path d="M6 18a6 6 0 0 1 0-11 8 8 0 0 1 14 1 5 5 0 0 1 0 10z" fill="#1490df" />
    <path d="M6 7a8 8 0 0 1 13 0l-9 6-8 3C-1 12 2 8 6 7z" fill="#0a5fb4" />
    <path d="M6 18l11-9c4-2 7 1 7 4s-2 5-4 5z" fill="#28a8ea" />
  </Draw>
);
const CubeIcon = () => (
  <Draw w={22} h={24}><path d="M11 1l10 4v14l-10 4-10-4V5z" fill="#25b5c9" /><path d="M11 1l10 4-10 4L1 5z" fill="#9be7f0" /><path d="M11 9v14l10-4V5z" fill="#1492a8" /><path d="M1 19l10-4 10 4-10 4z" fill="#60d4e0" opacity=".6" /></Draw>
);
const DesktopIcon = () => (
  <Draw w={22} h={18}><path d="M.5 1.5h21v15H.5z" fill="#1aa0f8" stroke="#0d6cb5" /><path d="M1 15h20" stroke="#0a5a9a" strokeWidth="1.5" strokeDasharray="2 1" /></Draw>
);
const DocumentsIcon = () => (
  <Draw w={22} h={24}><path d="M3 1h12l4 4v18H3z" fill="#fdfdfd" stroke="#8a8a8a" /><path d="M5 8l3-5 1 5M11 5h3M5 10h12" stroke="#2d88d0" strokeWidth="1.5" /><path d="M5 13h5M5 16h5M5 19h12" stroke="#999" /><path d="M11 12h6v5h-6z" fill="#4a86b8" /></Draw>
);
const DownloadIcon = () => (
  <Draw w={22} h={22}><path d="M7 1h8v9h5l-9 11-9-11h5z" fill="#3a94e0" /></Draw>
);
const MusicIcon = () => (
  <Draw w={22} h={24}><path d="M10 1h3c0 4 6 5 6 11 0 3-1 4-2 6 1-5-1-7-4-8v9a5 4 0 1 1-3-4z" fill="#109bf0" /></Draw>
);
const PictureIcon = () => (
  <Draw w={22} h={18}><path d="M.5 1.5h21v15H.5z" fill="#fff" stroke="#999" /><path d="M2.5 3.5h17v11h-17z" fill="#7fb8e8" /><path d="M2.5 8c5 0 9 4 17 3v3.5h-17z" fill="#2f6b58" /></Draw>
);
const VideoIcon = () => (
  <Draw w={22} h={24}><path d="M0 0h22v24H0z" fill="#444" /><path d="M4 1h14v10H4zM4 13h14v10H4z" fill="#4a7fd8" /><path d="M1.5 1v22M20.5 1v22" stroke="#ddd" strokeWidth="2" strokeDasharray="2 1.5" /><circle cx="14" cy="6" r="4" fill="#e0b020" /><circle cx="8" cy="9" r="2.5" fill="#c03a2a" /><path d="M10 23a4 4 0 0 1 8 0z" fill="#e8a818" /><path d="M12 15l2 3 2-3z" fill="#b22" /></Draw>
);
const DriveIcon = () => (
  <Draw w={22} h={22}><path d="M0 4l4-1v4H0zM5 3l4-1v5H5zM0 8h4v4H0zM5 8h4v5H5z" fill="#20a8e8" /><path d="M1 14l8-5h10l3 4-10 6z" fill="#d6d6d6" /><path d="M1 14l11 5v3L1 17z" fill="#3a3a3a" /><path d="M12 19l10-6v4l-10 5z" fill="#aaa" /></Draw>
);
const LibrariesIcon = () => (
  <Draw w={22} h={24}><path d="M1 2h8l2 3H1z" fill="#d89a1a" /><path d="M0 5h22v17H0z" fill="#fbc94a" /><path d="M4 23V13h14v10h-4v-5H8v5z" fill="#2f8fe0" /></Draw>
);
const CustomIcon = () => (
  <Draw w={22} h={26}><path d="M1 2h16v22H1z" fill="#ffe48e" stroke="#e0b84a" /><path d="M3 2v22" stroke="#fff3c4" /><path d="M8 1h13v11H8z" fill="#fff" stroke="#888" /><path d="M10 7l2 2 3-5" stroke="#2f7fd0" /><path d="M16 7h3" stroke="#888" /></Draw>
);

/* ---------- symbol set ---------- */

const BROWN = '#d25c00';
const PURPLE = '#cc00ff';
const PALE = '#e8a878';
const TEAL = '#00d7d7';

const Line = ({ c, t, x = 0 }: { c: string; t: number; x?: number }) => (
  <path d={`M${x ? x + t / 2 : 0} 26H52`} stroke={c} strokeWidth={t} strokeLinecap={x ? 'round' : 'butt'} />
);
const Dashed = ({ c, dash }: { c: string; dash: string }) => <path d="M0 26H52" stroke={c} strokeWidth="2" strokeDasharray={dash} />;
const Comb = ({ c, y, t, end }: { c: string; y: number; t: number; end: number }) => (
  <path d={`M0 ${y}h52v${t}H0zM0 ${y}h3V${end}H0zM12 ${y}h3V${end}h-3zM25 ${y}h3V${end}h-3zM37 ${y}h3V${end}h-3zM49 ${y}h3V${end}h-3z`} fill={c} />
);
const Dots = ({ c, r = 2, at }: { c: string; r?: number; at: string }) => (
  <g fill={c}>{at.split(' ').map((p) => { const [x, y] = p.split(','); return <circle key={p} cx={x} cy={y} r={r} />; })}</g>
);
const Fill = ({ c }: { c: string }) => <rect width="53" height="53" fill={c} />;
const Vee = ({ c }: { c: string }) => <path d="M18 18h5l3 8 3-8h5l-8 17z" fill={c} />;

const SYMBOLS: React.ReactNode[] = [
  <circle cx="26" cy="26" r="12" fill={PURPLE} />, <Line c={PURPLE} t={2} />, <Fill c="#d9a8ff" />, <Line c={BROWN} t={3} x={1} />, <Line c={BROWN} t={3} x={1} />,
  <path d="M26 18v11" stroke={BROWN} strokeWidth="4" />, <Line c={BROWN} t={5} x={2} />, <Line c={BROWN} t={5} x={2} />, <Dashed c={BROWN} dash="25 2" />, <Dashed c={BROWN} dash="25 2" />,
  <path d="M26 18v11" stroke={BROWN} strokeWidth="2" />, <Comb c={BROWN} y={24} t={4} end={38} />, <path d="M20.5 17v11.5h11V17" stroke={BROWN} strokeWidth="3" />, <Line c={BROWN} t={4} />, <Line c={BROWN} t={3} />,
  <><Line c={BROWN} t={4} /><circle cx="26" cy="26" r="5" fill={BROWN} /></>,
  <><path d="M0 26h24M28 26h24" stroke={BROWN} strokeWidth="4" /><Dots c={BROWN} r={5} at="12,26 40,26" /></>,
  <path d="M1 26Q14 23 26 23t25 3q-13 3-25 3T1 26z" fill={BROWN} />,
  <Dots c={BROWN} r={2.5} at="3,26 12,26 21,26 31,26 40,26 49,26" />, <circle cx="26" cy="26" r="6" fill={BROWN} />,
  <ellipse cx="26" cy="26" rx="5" ry="9.5" fill={BROWN} />, <path d="M18 21a8 8 0 0 0 16 0" stroke={BROWN} strokeWidth="3.5" />, <Vee c={BROWN} />,
  <Dots c={BROWN} r={2.5} at="9,12 13,22 23,2 22,14 23,25 22,36 23,48 13,46 9,35 32,12 36,22 32,35 36,46 46,2 45,14 46,25 45,36 46,48" />, <circle cx="26" cy="26" r="2.5" fill={BROWN} />,
  <Dots c={BROWN} r={2.2} at="8,4 23,2 30,4 45,2 4,10 11,11 18,9 26,10 33,11 40,9 48,10 5,16 11,18 19,18 27,16 33,18 41,18 48,16 15,22 23,24 30,22 37,24 45,22 8,25 4,32 11,32 18,31 26,32 33,32 40,31 48,32 5,37 11,40 19,39 27,37 33,40 41,39 48,37 15,44 23,46 30,47 37,44 45,46 8,47" />,
  <path d="M26 20l-6.5 12h13z" stroke={BROWN} strokeWidth="4" />,
  <><Dashed c={PALE} dash="11.6 2" /><path d="M5.5 26v7M19 26v7M33 26v7M46 26v7" stroke={PALE} strokeWidth="2.5" /></>,
  <path d="M8 26v7M26 26v7M44 26v7" stroke={PALE} strokeWidth="2" />, <Dashed c={PALE} dash="16 2" />,
  <Comb c="#000" y={22} t={8} end={39} />, <path d="M19 15h3v9h8v-9h3v17H19z" fill="#000" />, <Line c="#000" t={8} />, <Line c="#000" t={6} x={2} />, <rect x="19" y="22" width="14" height="8" fill="#000" />,
  null, null, null, null, <Line c="#808080" t={5} />,
  null, null, null, null, <Vee c="#000" />,
  null, null, null, null, <circle cx="26" cy="26" r="7" fill="#000" />,
  null, null, null, null, <path d="M8 15l7.6-3.4L12 20zM32.6 22l7-8.4V29zM18 28l-5 10 8.6 4.6zM31 44l11-1.4L44.6 52z" fill="#000" />,
  null, null, null, null, <Dots c="#808080" at="21,11 33,6 48,9 10,18 19,22 30,18 41,18 33,28 21,33 48,31 10,40 19,44 30,39 41,40 33,50" />,
  null, null, null, null, <><Fill c="#ffdb99" /><Dots c="#808080" at="19,4 33,4 48,4 19,18 33,18 48,18 19,33 33,33 48,33 19,48 33,48 48,48 11,11 26,11 41,11 11,26 26,26 41,26 11,41 26,41 41,41" /></>,
  <Fill c="#bebebe" />, <path d="M0 0l52 52M52 0L0 52M26 0l26 26M26 0L0 26M0 26l26 26M52 26L26 52" stroke="#bebebe" strokeWidth="2.5" />, <path d="M17 17l18 18M35 17L17 35" stroke="#808080" strokeWidth="4" />, <path d="M0 23h52M0 29h52" stroke="#000" strokeWidth="2.5" />, <Line c="#000" t={2} />,
  <Comb c={PURPLE} y={23} t={6} end={38} />,
  <Dots c={PURPLE} r={2.2} at="17,2 40,2 8,7 30,7 3,11 11,14 17,10 25,11 34,14 40,10 47,11 9,22 23,19 32,22 45,19 16,25 38,25 8,29 30,29 3,34 11,36 17,33 25,34 34,36 40,33 47,34 23,41 45,41 9,44 32,44 17,47 40,47" />,
  <rect x="2" y="2" width="48" height="48" rx="2" fill="#00ffff" stroke="#000" strokeWidth="4" />, <Fill c="#00ffff" />, <Line c="#000" t={4} />,
  <><Fill c="#80ffff" /><rect x="1" y="1" width="50" height="50" stroke={TEAL} strokeWidth="2" /></>,
  <><Fill c="#80ffff" /><rect x="1" y="1" width="50" height="50" stroke="#fff" strokeWidth="2" /><rect x="1" y="1" width="50" height="50" stroke={TEAL} strokeWidth="2" strokeDasharray="16 4" strokeDashoffset="4" /></>,
  <Fill c="#80ffff" />, <Line c={TEAL} t={2} />, <Dashed c={TEAL} dash="16 2" />,
  <Fill c="#00ffff" />, null, null, null, null,
];

/* ---------- data ---------- */

const MENUS: [string, string, string][] = [
  ['', 'F', 'ile'], ['', 'E', 'dit'], ['', 'V', 'iew'], ['', 'T', 'ools'],
  ['M', 'a', 'p'], ['Sy', 'm', 'bols'], ['', 'T', 'emplates'], ['', 'H', 'elp'],
];

type Entry = { text: [string, string, string]; keys?: string; icon?: React.ReactNode; sub?: boolean; active?: boolean };
const FILE_MENU: (Entry | null)[] = [
  { text: ['', 'N', 'ew'], keys: 'Ctrl+N', icon: <NewIcon /> },
  { text: ['', 'O', 'pen...'], keys: 'Ctrl+O', icon: <OpenIcon /> },
  { text: ['Open ', 'r', 'ecent'], sub: true },
  { text: ['', 'S', 'ave'], keys: 'Ctrl+S', icon: <SaveIcon /> },
  { text: ['Save ', 'a', 's...'], keys: 'Ctrl+Shift+S' },
  null,
  { text: ['Import...', '', ''], active: true },
  { text: ['', 'E', 'xport as...'], sub: true },
  null,
  { text: ['', 'P', 'rint...'], keys: 'Ctrl+P', icon: <PrintIcon /> },
  null,
  { text: ['S', '', ''] },
  null,
  { text: ['C', '', ''], icon: <ExitCross /> },
  { text: ['E', '', ''] },
];

const TREE: { name: string; icon: React.ReactNode; root?: boolean; spaced?: boolean; selected?: boolean }[] = [
  { name: 'san juan county p', icon: <FolderIcon /> },
  { name: 'OneDrive', icon: <CloudIcon />, root: true, spaced: true },
  { name: 'This PC', icon: <Monitor />, root: true, spaced: true },
  { name: '3D Objects', icon: <CubeIcon /> },
  { name: 'Desktop', icon: <DesktopIcon /> },
  { name: 'Documents', icon: <DocumentsIcon />, selected: true },
  { name: 'Downloads', icon: <DownloadIcon /> },
  { name: 'Music', icon: <MusicIcon /> },
  { name: 'Pictures', icon: <PictureIcon /> },
  { name: 'Videos', icon: <VideoIcon /> },
  { name: 'Windows-SSD (C', icon: <DriveIcon /> },
];

const Mnemonic = ({ text: [a, b, c] }: { text: [string, string, string] }) => <span>{a}<u>{b}</u>{c}</span>;

const Tools = ({ icons }: { icons: [string, React.ReactNode][] }) => (
  <>{icons.map(([name, icon]) => <ToolButton key={name} aria-label={name}>{icon}</ToolButton>)}</>
);

const STEPS = [
  { n: 1, cx: 840, cy: 90, rx: 115, ry: 25, x: 977, y: 94 },
  { n: 2, cx: 134, cy: 253, rx: 134, ry: 19, x: 293, y: 280 },
  { n: 3, cx: 507, cy: 542, rx: 169, ry: 44, x: 708, y: 548 },
  { n: 4, cx: 1157, cy: 1003, rx: 76, ry: 31, x: 1005, y: 1037 },
  { n: 5, cx: 1362, cy: 854, rx: 65, ry: 26, x: 1219, y: 870 },
];

const GRID_STEP = 93.86;
const gridLines = (start: number, count: number) => Array.from({ length: count }, (_, i) => Math.round(start + i * GRID_STEP));

const CourseMap = () => (
  <MapView role="img" aria-label="Map">
    <g stroke={PURPLE} strokeWidth="5" fill="none">
      <path d="M765 220L741 96l124-13 24 130" />
      <path d="M801 220l-20-109 59-4 18 110" />
    </g>
    <g stroke="#7c7c7c" strokeWidth="1.5">
      {gridLines(14, 30).map((x) => <line key={x} x1={x} x2={x} y1="0" y2="100%" />)}
      {gridLines(56, 20).map((y) => <line key={y} x1="0" x2="100%" y1={y} y2={y} />)}
    </g>
    <g fill={PURPLE} fontFamily='"DejaVu Sans Condensed", "Noto Sans", sans-serif' fontSize="26">
      {[596, 689, 784, 878, 971].map((x, i) => <text key={x} x={x} y="35">col {i + 1}</text>)}
      <text x="491" y="129">row 1</text>
      <text x="1058" y="129">row 1</text>
    </g>
  </MapView>
);

export default function App() {
  return (
    <Page>
      <GlobalStyle />
      <TitleBar>
        <OomIcon />
        <AppTitle>San Juan Overlook day 3.omap - OpenOrienteering Mapper 0.9.3</AppTitle>
        <WindowButtons>
          <WindowButton aria-label="Minimize"><Draw w={16} h={16}><path d="M0 8.5h16" stroke="#000" /></Draw></WindowButton>
          <WindowButton aria-label="Restore"><Draw w={16} h={16}><path d="M.5 4.5h11v11H.5zM3.5 4V1.5h11v11H12" stroke="#000" /></Draw></WindowButton>
          <WindowButton aria-label="Close"><Close /></WindowButton>
        </WindowButtons>
      </TitleBar>
      <MenuBar>
        {MENUS.map((m, i) => <MenuBarItem key={i} $open={i === 0}><Mnemonic text={m} /></MenuBarItem>)}
      </MenuBar>

      <Toolbar $inset={240}>
        <ToolGroup>
          <Tools icons={[['Copy', <CopyIcon />], ['Paste', <PasteIcon />]]} />
          <Separator />
          <Tools icons={[['Undo', <Turn fill="#f0cf2a" stroke="#b8960c" />], ['Redo', <Turn fill="#d4d4d4" stroke="#aaa" flip />]]} />
        </ToolGroup>
        <ToolGroup>
          <Grip />
          <ToolButton aria-label="Show grid" $pressed><GridIcon /></ToolButton>
          <ToolButton aria-label="Grid options" $narrow $pressed><Down /></ToolButton>
          <Separator />
          <Tools icons={[
            ['Pan', <Move fill="#7c94e8" stroke="#3557b8" />],
            ['Zoom in', <Magnifier sign="plus" />],
            ['Zoom out', <Magnifier sign="minus" />],
            ['Show whole map', <FitIcon />],
            ['Overlays', <LayersIcon />],
          ]} />
        </ToolGroup>
        <ToolGroup $open>
          <Grip />
          <SelectShell>
            <SymbolSelect aria-label="Symbol"><option>101 contours</option></SymbolSelect>
            <SelectArrow><Down w={10} /></SelectArrow>
          </SelectShell>
        </ToolGroup>
      </Toolbar>

      <Toolbar $inset={231}>
        <ToolGroup>
          <Tools icons={[['Draw rectangle', <DrawRectIcon />], ['Draw free-hand', <CurveIcon />], ['Fill', <BucketIcon />], ['Write text', <LetterIcon />]]} />
          <Separator />
          <ToolButton aria-label="Paint on template"><PencilIcon /></ToolButton>
          <ToolButton aria-label="Template options" $narrow><Down /></ToolButton>
        </ToolGroup>
        <ToolGroup>
          <Grip />
          <Tools icons={[
            ['Delete', <TrashIcon />], ['Duplicate', <DuplicateIcon />], ['Switch symbol', <SwitchIcon />],
            ['Fill or create border', <LassoIcon />], ['Switch dashes', <JunctionIcon />], ['Connect paths', <RingIcon />],
            ['Boolean', <Overlap mode="union" />], ['Cut object', <Scissors />], ['Cut hole', <Scissors ring />],
          ]} />
          <ToolButton aria-label="Cut options" $narrow><Down c="#999" /></ToolButton>
          <Tools icons={[
            ['Rotate', <Rotate />], ['Rotate pattern', <Rotate inner />],
            ['Scale', <Move fill="#aaa" stroke="#999" gap />], ['Measure', <CompassIcon />],
          ]} />
        </ToolGroup>
        <ToolGroup $open>
          <Grip />
          <Tools icons={[
            ['Cut away', <CutHoleIcon />], ['Cut outside', <CutAwayIcon />], ['Paths to curves', <DiamondRing />],
            ['Simplify path', <DiamondRing bold />], ['Distribute points', <DotsIcon />], ['Intersect', <Overlap mode="cut" />],
            ['Difference', <Overlap mode="diff" />], ['Exclusive or', <Overlap mode="xor" />], ['Mask', <MaskIcon />],
          ]} />
        </ToolGroup>
      </Toolbar>

      <Workspace>
        <CourseMap />
        <Dock>
          <DockHeader>
            <DockTitle>Symbols</DockTitle>
            <button aria-label="Float"><Draw w={14} h={14}><path d="M4 1h9v7h-3M4 1v3M4 2h9M1 6h8v7H1zM1 7h8" stroke="#333" strokeWidth="1.5" /></Draw></button>
            <button aria-label="Close symbols"><Close s={13} c="#333" t={3} /></button>
          </DockHeader>
          <SymbolFrame>
            <SymbolGrid>
              {SYMBOLS.map((s, i) => <SymbolCell key={i} aria-label={`Symbol ${i + 1}`}><Draw w={52} h={52}>{s}</Draw></SymbolCell>)}
            </SymbolGrid>
            <ClassicScroll>
              <ClassicScrollButton aria-label="Scroll up"><Draw w={14} h={8}><path d="M0 8h14L7 1z" fill="#000" /></Draw></ClassicScrollButton>
              <ClassicThumb />
              <ClassicScrollButton aria-label="Scroll down"><Draw w={14} h={8}><path d="M0 0h14L7 7z" fill="#000" /></Draw></ClassicScrollButton>
            </ClassicScroll>
          </SymbolFrame>
        </Dock>
      </Workspace>

      <StatusBar>
        <StatusCell $grow><span><b>Click</b>: Select a single object. <b>Drag</b>: Select multiple objects. <b>Shift+Click</b>: Toggle selection.</span></StatusCell>
        <StatusCell><Magnifier w={20} />0.716x</StatusCell>
        <Coordinates>-143.17 110.03 (mm)</Coordinates>
      </StatusBar>
      <TaskbarEdge />

      <FileMenu>
        {FILE_MENU.map((m, i) => m ? (
          <MenuRow key={i} $active={m.active}>
            <MenuIcon>{m.icon}</MenuIcon>
            <Mnemonic text={m.text} />
            <span>{m.keys}</span>
            {m.sub && <Draw w={6} h={10}><path d="M0 0v10l6-5z" fill="#000" /></Draw>}
          </MenuRow>
        ) : <MenuLine key={i} />)}
      </FileMenu>

      <ImportDialog aria-label="Import">
        <DialogHeader $tall>
          <OomIcon />
          <DialogTitle>Import...</DialogTitle>
          <button aria-label="Close dialog"><Close /></button>
        </DialogHeader>
        <AddressRow>
          <NavButtons>
            <HistoryButtons>
              <button aria-label="Back"><Draw w={20} h={18}><path d="M20 9H2M9 2L2 9l7 7" stroke="#666" strokeWidth="2" /></Draw></button>
              <button aria-label="Forward"><Draw w={20} h={18}><path d="M0 9h18M11 2l7 7-7 7" stroke="#ddd" strokeWidth="2" /></Draw></button>
            </HistoryButtons>
            <button aria-label="Recent locations"><Chevron w={10} /></button>
            <button aria-label="Up"><Draw w={16} h={20}><path d="M8 20V2M1 9l7-7 7 7" stroke="#666" strokeWidth="2" /></Draw></button>
          </NavButtons>
          <AddressBox>
            <Draw w={30} h={24}><path d="M7 2l6-1v22l-6-3z" fill="#8fd6fa" /><path d="M11 3l12 0v17l-10 3z" fill="#4ab4f0" /><path d="M15 4v18M19 4v17" stroke="#2a94d8" /></Draw>
            <Draw w={14} h={14}><path d="M6 2l5 5-5 5" stroke="#666" strokeWidth="2" /></Draw>
            <Crumb>Search Results in Documents</Crumb>
            <BoxButton aria-label="Previous locations"><Chevron w={14} t={2.5} /></BoxButton>
            <BoxButton aria-label="Refresh" $divided><Draw w={18} h={18}><path d="M12 4a6.5 6.5 0 1 1-7 1" stroke="#666" strokeWidth="2.5" /><path d="M1 1h8v8z" fill="#666" /></Draw></BoxButton>
          </AddressBox>
          <SearchBox aria-label="Search">
            <Draw w={20} h={20}><circle cx="13" cy="7" r="6" stroke="#777" strokeWidth="1.2" /><path d="M9 11l-8 8" stroke="#777" strokeWidth="1.2" /></Draw>
            <SearchInput defaultValue="SanJuanOverloo..." />
            <BoxButton aria-label="Clear search"><Close s={15} c="#888" /></BoxButton>
            <GoButton aria-label="Search now"><Draw w={20} h={18}><path d="M1 9h17M10 1l8 8-8 8" stroke="#fff" strokeWidth="1.5" /></Draw></GoButton>
          </SearchBox>
        </AddressRow>
        <CommandBar>
          <OrganizeButton>Organize <Down c="#1e395b" w={8} /></OrganizeButton>
          <IconButton $gap={0} aria-label="View">
            <Draw w={22} h={24}>
              <path d="M.5 1.5h6v6h-6zM.5 9.5h6v6h-6zM.5 17.5h6v5h-6z" stroke="#888" />
              <path d="M2 4h3M2 12h3M2 20h3" stroke="#3a80c8" strokeWidth="2" />
              <path d="M10 3h12M10 11h12M10 19h12" stroke="#777" /><path d="M10 6h12M10 14h12M10 22h12" stroke="#4a90e8" />
            </Draw>
          </IconButton>
          <IconButton $gap={15} aria-label="View options"><Down c="#1e395b" w={8} /></IconButton>
          <IconButton $gap={32} aria-label="Preview pane">
            <Draw w={22} h={18}><path d="M.5.5h21v17H.5z" fill="#fff" stroke="#888" /><path d="M0 1.5h22" stroke="#777" strokeWidth="2" /><path d="M5.5 2v15" stroke="#aaa" /><path d="M12 3h9v14h-9z" fill="#3a98e8" /></Draw>
          </IconButton>
          <IconButton $gap={32} aria-label="Help">
            <Draw w={23} h={23}><circle cx="11.5" cy="11.5" r="11" fill="#0063b8" /><text x="11.5" y="18" textAnchor="middle" fontSize="18" fill="#fff">?</text></Draw>
          </IconButton>
        </CommandBar>
        <Browser>
          <Tree>
            {TREE.map((t) => (
              <TreeItem key={t.name} $root={t.root} $spaced={t.spaced} $selected={t.selected}>{t.icon}{t.name}</TreeItem>
            ))}
          </Tree>
          <TreeScroll>
            <Chevron w={13} up />
            <TreeThumb />
            <Chevron w={13} />
          </TreeScroll>
          <Results>
            <FileEntry>
              <FileIcon><DocSheet /></FileIcon>
              <span><Mark $big>SanJuanOverlook.shp</Mark></span>
              <Meta $col={4}><Muted>Date modified:</Muted> 10/1/2021 10:48 AM</Meta>
              <PathText>C:\Users\ericj\Documents</PathText>
              <Meta $col={3}><Muted>Type:</Muted> <Mark>SHP</Mark>File</Meta>
              <Meta $col={4}><Muted>Size:</Muted> 246 KB</Meta>
            </FileEntry>
            <SearchAgain>
              Search again in:
              <PlaceLinks>
                <PlaceLink href="#libraries"><LibrariesIcon />Libraries</PlaceLink>
                <PlaceLink href="#this-pc"><Monitor />This PC</PlaceLink>
                <PlaceLink href="#custom"><CustomIcon />Custom...</PlaceLink>
              </PlaceLinks>
            </SearchAgain>
          </Results>
        </Browser>
        <DialogFooter>
          <FieldLabel htmlFor="file-name">File <u>n</u>ame:</FieldLabel>
          <FieldShell>
            <FileInput id="file-name" />
            <FieldChevron><Chevron w={12} t={1.2} /></FieldChevron>
          </FieldShell>
          <FieldShell>
            <TypeSelect aria-label="File type"><option>Importable files (*.000;*.bna;*.csv)</option></TypeSelect>
            <FieldChevron><Chevron w={12} t={1.2} /></FieldChevron>
          </FieldShell>
          <ActionRow>
            <FlatButton $primary><u>O</u>pen</FlatButton>
            <FlatButton>Cancel</FlatButton>
          </ActionRow>
          <ResizeGrip>
            <Draw w={12} h={12}><path d="M9 0h3v3H9zM9 4h3v3H9zM5 4h3v3H5zM9 8h3v3H9zM5 8h3v3H5zM1 8h3v3H1z" fill="#bfbfbf" /></Draw>
          </ResizeGrip>
        </DialogFooter>
        <Ghost $x={629} $y={354} $w={236}><Draw w={12} h={12}><circle cx="6" cy="6" r="5" fill="#ececec" /></Draw>Window Snip</Ghost>
      </ImportDialog>

      <AssignDialog aria-label="Assign new symbols">
        <DialogHeader>
          <OomIcon />
          <DialogTitle>Assign new symbols - OpenOrienteering Mapper 0.9.3</DialogTitle>
          <button aria-label="Close assign dialog"><Close c="#999" /></button>
        </DialogHeader>
        <TableFrame>
          <MappingTable>
            <thead><tr><HeadCell>Pattern</HeadCell><HeadCell>Replacement</HeadCell></tr></thead>
            <tbody>
              <tr>
                <BodyCell><CellRow><Draw w={52} h={8}><path d="M0 4h52" stroke="#a020ff" strokeWidth="4" /></Draw><CellText $focus>2 Line</CellText></CellRow></BodyCell>
                <BodyCell><CellRow><Draw w={52} h={8}><path d="M0 4h52" stroke={PURPLE} strokeWidth="2" /></Draw><CellText>2 Line</CellText></CellRow></BodyCell>
              </tr>
            </tbody>
          </MappingTable>
        </TableFrame>
        <ButtonRow>
          <ClassicButton $w={113} $default>OK</ClassicButton>
          <ClassicButton $w={151}>Symbol mapping <Down w={9} /></ClassicButton>
          <ClassicButton $w={112}>Cancel</ClassicButton>
          <ClassicButton $w={113}>Help</ClassicButton>
        </ButtonRow>
        <Ghost $x={404} $y={171} $w={150}><Draw w={12} h={12}><circle cx="6" cy="6" r="5" fill="#ececec" /></Draw>Window Snip</Ghost>
      </AssignDialog>

      <Annotations aria-label="Step markers">
        {STEPS.map((s) => (
          <g key={s.n}>
            <ellipse cx={s.cx} cy={s.cy} rx={s.rx} ry={s.ry} fill="none" stroke="#ed1c24" strokeWidth="5" />
            <text x={s.x} y={s.y} fill="#ed1c24">{s.n}</text>
          </g>
        ))}
      </Annotations>
    </Page>
  );
}
